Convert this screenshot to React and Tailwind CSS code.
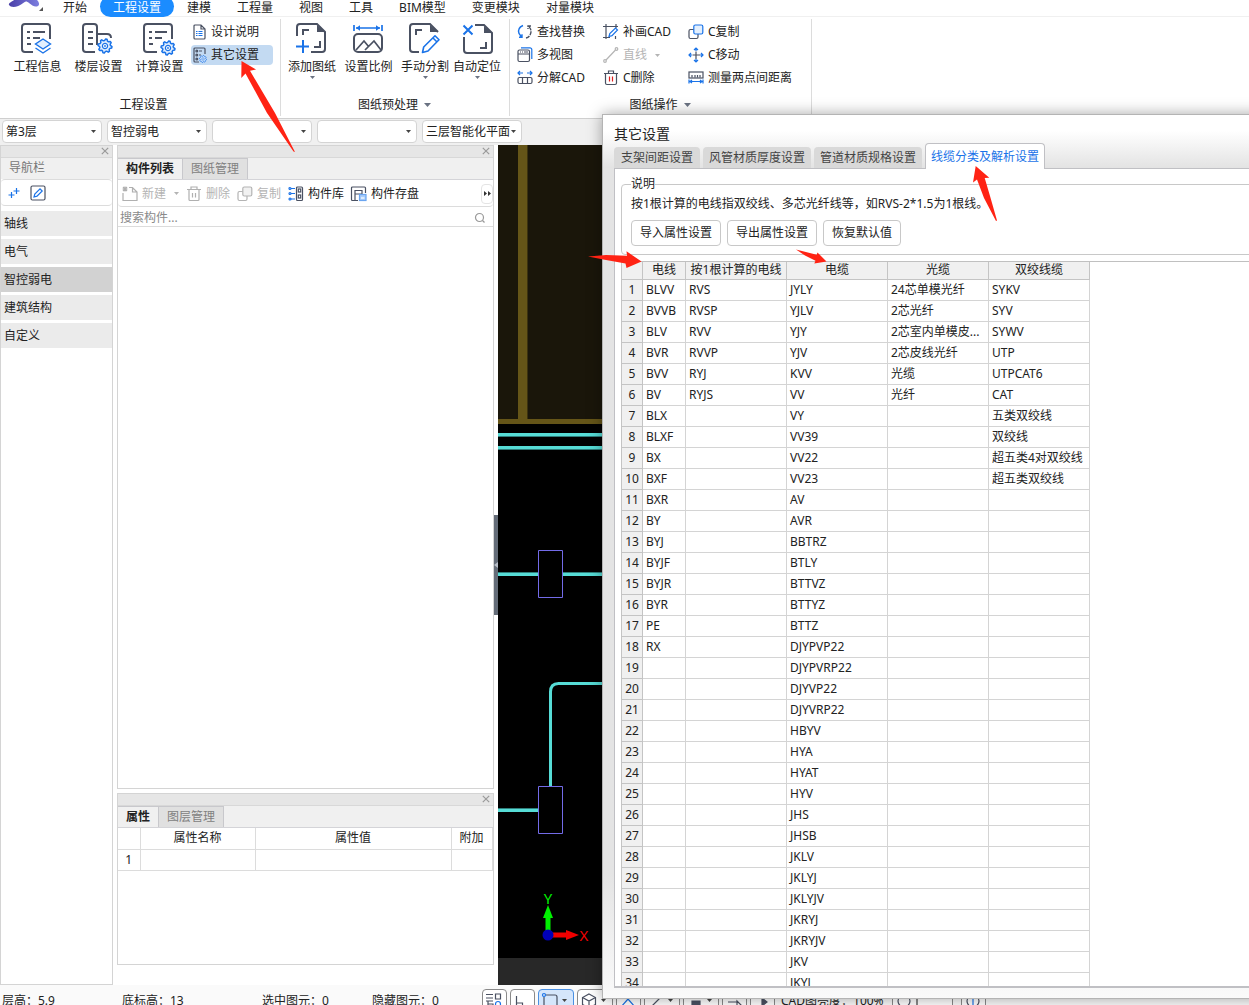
import React from 'react';
import clsx from 'clsx';

const DARK = '#4a5162';
const BLUE = '#1a73e8';

const MENU = ['开始', '工程设置', '建模', '工程量', '视图', '工具', 'BIM模型', '变更模块', '对量模块'];
const NAV = ['轴线', '电气', '智控弱电', '建筑结构', '自定义'];
const COMBOS = [
  { label: '楼层', value: '第3层' },
  { label: '专业', value: '智控弱电' },
  { label: '构件类型', value: '' },
  { label: '构件', value: '' },
  { label: '图纸', value: '三层智能化平面' },
];
const DIALOG_TABS = ['支架间距设置', '风管材质厚度设置', '管道材质规格设置', '线缆分类及解析设置'];

const COLUMNS = [
  {
    title: '电线',
    items: ['BLVV', 'BVVB', 'BLV', 'BVR', 'BVV', 'BV', 'BLX', 'BLXF', 'BX', 'BXF', 'BXR', 'BY', 'BYJ', 'BYJF', 'BYJR', 'BYR', 'PE', 'RX'],
  },
  { title: '按1根计算的电线', items: ['RVS', 'RVSP', 'RVV', 'RVVP', 'RYJ', 'RYJS'] },
  {
    title: '电缆',
    items: [
      'JYLY', 'YJLV', 'YJY', 'YJV', 'KVV', 'VV', 'VY', 'VV39', 'VV22', 'VV23', 'AV', 'AVR', 'BBTRZ', 'BTLY', 'BTTVZ', 'BTTYZ', 'BTTZ',
      'DJYPVP22', 'DJYPVRP22', 'DJYVP22', 'DJYVRP22', 'HBYV', 'HYA', 'HYAT', 'HYV', 'JHS', 'JHSB', 'JKLV', 'JKLYJ', 'JKLYJV', 'JKRYJ',
      'JKRYJV', 'JKV', 'JKYJ',
    ],
  },
  { title: '光缆', items: ['24芯单模光纤', '2芯光纤', '2芯室内单模皮...', '2芯皮线光纤', '光缆', '光纤'] },
  {
    title: '双绞线缆',
    items: ['SYKV', 'SYV', 'SYWV', 'UTP', 'UTPCAT6', 'CAT', '五类双绞线', '双绞线', '超五类4对双绞线', '超五类双绞线'],
  },
];
const ROWS = Array.from({ length: 34 }, (_, i) => i);

// outline of a cog with eight flat teeth
const GEAR_POINTS = Array.from({ length: 32 }, (_, i) => {
  const r = i % 4 < 2 ? 7 : 5.4;
  const a = ((i + 0.5) * Math.PI) / 16;
  return `${(r * Math.cos(a)).toFixed(2)},${(r * Math.sin(a)).toFixed(2)}`;
}).join(' ');

function Svg({ size = 16, className, children }) {
  return (
    <svg
      width={size}
      height={size}
      viewBox={`0 0 ${size} ${size}`}
      fill="none"
      stroke={DARK}
      strokeWidth={size > 20 ? 2 : 1.2}
      className={clsx('shrink-0 overflow-visible', className)}
      aria-hidden="true"
    >
      {children}
    </svg>
  );
}

function Gear({ x, y, s = 1 }) {
  return (
    <g transform={`translate(${x} ${y}) scale(${s})`} stroke={BLUE}>
      <polygon points={GEAR_POINTS} strokeWidth="1.5" strokeLinejoin="round" fill="#e3effd" />
      <circle r="2.6" strokeWidth="1.2" fill="#fff" />
      <circle r="0.9" fill={BLUE} stroke="none" />
    </g>
  );
}

function Caret({ className }) {
  return (
    <svg width="7" height="4" viewBox="0 0 7 4" className={clsx('shrink-0', className)} aria-hidden="true">
      <path d="M0 0h7L3.5 4z" fill="currentColor" />
    </svg>
  );
}

function SmallCaret({ className }) {
  return (
    <svg width="5" height="3" viewBox="0 0 5 3" className={clsx('shrink-0', className)} aria-hidden="true">
      <path d="M0 0h5L2.5 3z" fill="currentColor" />
    </svg>
  );
}

/* ---- large ribbon icons ---- */

const ProjectInfoIcon = () => (
  <Svg size={32}>
    <path d="M11 29H3a3 3 0 0 1-3-3V4a3 3 0 0 1 3-3h22a3 3 0 0 1 3 3v12M5 9h3M11 9h12M5 15h3M11 15h7M5 21h4" />
    <path d="M21 16l7.5 5-7.5 5-7.5-5z" stroke={BLUE} strokeWidth="1.4" fill="#e3effd" />
    <path d="M13.5 25l7.5 5 7.5-5" stroke={BLUE} strokeWidth="1.4" />
  </Svg>
);

const FloorIcon = () => (
  <Svg size={32}>
    <path d="M12 29H3a3 3 0 0 1-3-3V4a3 3 0 0 1 3-3h8a3 3 0 0 1 3 3v18M14 11h10c3 0 4 2 4 4M5 9h5M5 15h5M5 21h5" />
    <Gear x={22} y={23} />
  </Svg>
);

const CalcIcon = () => (
  <Svg size={32}>
    <path d="M13 29H3a3 3 0 0 1-3-3V4a3 3 0 0 1 3-3h22a3 3 0 0 1 3 3v12M5 9h3M11 9h12M5 15h3M11 15h7M5 21h4" />
    <Gear x={24} y={25} />
  </Svg>
);

const AddDrawingIcon = () => (
  <Svg size={32}>
    <path d="M1 13V4a3 3 0 0 1 3-3h17l8 8v17a3 3 0 0 1-3 3H15M7 12V7h6M24 18v6h-6" />
    <path d="M21 2v7h8z" fill={DARK} stroke="none" />
    <path d="M7 17v13M0 23.5h13" stroke={BLUE} />
  </Svg>
);

const ScaleIcon = () => (
  <Svg size={32}>
    <rect x="1" y="11" width="28" height="18" rx="4" />
    <path d="M3 27l8-9 5 6M12 27l9-9 7 9" strokeWidth="1.7" />
    <path d="M1 2v6M29 2v6M3 5h24" stroke={BLUE} strokeWidth="1.7" />
    <path d="M3 5l4-2.8v5.6zM27 5l-4-2.8v5.6z" fill={BLUE} stroke="none" />
  </Svg>
);

const SplitIcon = () => (
  <Svg size={32}>
    <path d="M10 29H4a3 3 0 0 1-3-3V4a3 3 0 0 1 3-3h17l8 8M7 12V7h6" />
    <path d="M21 2v7h8z" fill={DARK} stroke="none" />
    <path d="M13.5 29.5l1.2-5.5L26 12.8l4 4L19 28z M24 15l4 4" stroke={BLUE} strokeWidth="1.6" strokeLinejoin="round" />
  </Svg>
);

const LocateIcon = () => (
  <Svg size={32}>
    <path d="M3 14v13a3 3 0 0 0 3 3h22a3 3 0 0 0 3-3V10l-8-8h-9M25 19v6h-6" />
    <path d="M23 3v7h8z" fill={DARK} stroke="none" />
    <path d="M2.5 2.5l9 9M11.5 2.5l-9 9" stroke={BLUE} />
  </Svg>
);

/* ---- small ribbon icons ---- */

const DesignNoteIcon = () => (
  <Svg>
    <path d="M4 1h6l4 4v9a1 1 0 0 1-1 1H4a1 1 0 0 1-1-1V2a1 1 0 0 1 1-1zM10 1v4h4" />
    <path d="M5 7.5h1.500M7.500 7.500h4M5 9.500h1.500M7.500 9.500h4M5 11.500h1.500M7.500 11.500h4" stroke={BLUE} strokeWidth="1" />
  </Svg>
);

const OtherSettingIcon = () => (
  <Svg>
    <path d="M8 15H4a1 1 0 0 1-1-1V2a1 1 0 0 1 1-1h9a1 1 0 0 1 1 1v5M8 4h3M8 8h2" />
    <circle cx="5.800" cy="4" r="0.900" />
    <circle cx="5.800" cy="8" r="0.900" />
    <circle cx="5.800" cy="12" r="0.900" />
    <Gear x={12} y={12} s={0.5} />
  </Svg>
);

const ReplaceIcon = () => (
  <Svg>
    <path d="M6 1.500C2.500 3 .8 6 2 9.500L4.500 13M2 13.300h3v-3" stroke={BLUE} strokeWidth="1.400" />
    <path d="M9 14c4-1 6-5 4.500-9L12 2.500M14 2h-3v3" strokeDasharray="4 1" strokeWidth="1.400" />
  </Svg>
);

const MultiViewIcon = () => (
  <Svg>
    <rect x="1" y="3" width="11.500" height="11.500" rx="1.500" />
    <path d="M1 7h11.500M3 5h1M5 5h1M7 5h4" />
    <path d="M4 .8h9a1.800 1.800 0 0 1 1.800 1.800V12" stroke={BLUE} />
  </Svg>
);

const ExplodeIcon = () => (
  <Svg>
    <rect x="1" y="7.500" width="14" height="6" rx="1.500" />
    <path d="M5.500 7.500v6M10.500 7.500v6" />
    <path d="M1 3h5M10 3h5M3 1L1 3l2 2M13 1l2 2-2 2" stroke={BLUE} />
  </Svg>
);

const PatchIcon = () => (
  <Svg>
    <path d="M3 0v15M0 2.500h15M12.500 12v3M0 13.500h7M13 0v4" />
    <path d="M6 12.500l.8-3L12.500 4l2 2-5.500 5.700z" stroke={BLUE} />
  </Svg>
);

const LineIcon = () => (
  <Svg>
    <g stroke="#b4b4b4">
      <circle cx="2" cy="14" r="1.300" />
      <circle cx="13.500" cy="2" r="1.300" />
      <path d="M3 13L12.500 3" />
    </g>
  </Svg>
);

const DeleteIcon = () => (
  <Svg>
    <path d="M1 3.500h14M5.500 3V1h5v2M2.500 3.500v9.500a1.500 1.500 0 0 0 1.500 1.500h8a1.500 1.500 0 0 0 1.500-1.500V3.500" />
    <path d="M6.500 6.500v5M9.500 6.500v5" stroke="#e02020" />
  </Svg>
);

const CopyIcon = ({ muted }) => (
  <Svg>
    <rect x="1" y="5.500" width="9" height="9" rx="1.500" stroke={muted ? '#b4b4b4' : DARK} />
    <rect x="5.800" y="1" width="9" height="9" rx="1.500" stroke={muted ? '#b4b4b4' : BLUE} fill={muted ? '#f1f1f1' : '#e3effd'} />
  </Svg>
);

const MoveIcon = () => (
  <Svg>
    <path d="M8 4.500V12M4.500 8H12" />
    <path d="M8 4V1M8 12v3M4 8H1M12 8h3M6 3l2-2 2 2M6 13l2 2 2-2M3 6L1 8l2 2M13 6l2 2-2 2" stroke={BLUE} />
  </Svg>
);

const MeasureIcon = () => (
  <Svg>
    <rect x="1" y="2" width="14" height="6" />
    <path d="M4 5v2.500M7 5v2.500M9.500 5v2.500M12 5v2.500" />
    <path d="M1 9.500v4M15 9.500v4M2 11.500h12M4 10l-2 1.500L4 13M12 10l2 1.500-2 1.500" stroke={BLUE} />
  </Svg>
);

/* ---- panel icons ---- */

const NewIcon = () => (
  <Svg>
    <path d="M1 7v7.500h14V6l-4.500-4.500H7M10.500 1.500V6H15M1 1l4 4M5 1L1 5M3 .5v5M.5 3h5" stroke="#b0b0b0" />
  </Svg>
);

const TrashIcon = () => (
  <Svg>
    <path d="M1 3.500h14M5 3V1h6v2M3 3.500v10a1 1 0 0 0 1 1h8a1 1 0 0 0 1-1v-10M6.500 7v4.500M9.500 7v4.500" stroke="#b0b0b0" />
  </Svg>
);

const LibraryIcon = () => (
  <Svg>
    <rect x="8.500" y="1" width="6" height="13.500" rx="1" />
    <rect x="10.300" y="3" width="2.400" height="3" />
    <rect x="10.300" y="9" width="2.400" height="3" />
    <g stroke={BLUE}>
      <circle cx="2" cy="2.500" r="1" />
      <circle cx="2" cy="7.500" r="1" />
      <circle cx="2" cy="13" r="1" />
      <path d="M3 2.500h4M3 7.500h4M3 13h4" />
    </g>
  </Svg>
);

const SaveIcon = () => (
  <Svg>
    <path d="M7 14.500H1.500a1 1 0 0 1-1-1V2a1 1 0 0 1 1-1h12a1 1 0 0 1 1 1v5M4 14V4M4 4.500h7V8H4" />
    <rect x="8.500" y="8.500" width="6.500" height="6" fill="#a9cdfa" stroke="#6aa5f0" />
    <path d="M10 12h3.500" stroke="#fff" />
  </Svg>
);

const CloseIcon = () => (
  <svg width="8" height="8" viewBox="0 0 8 8" aria-hidden="true">
    <path d="M.8 .8l6.400 6.400M7.200 .8L.8 7.200" stroke="#9a9a9a" strokeWidth="1.200" />
  </svg>
);

function BigButton({ icon, label, className, menu }) {
  return (
    <button type="button" className={clsx('flex flex-col items-center whitespace-nowrap', className)}>
      {icon}
      <span className="mt-[3px] h-[18px] leading-[18px]">{label}</span>
      {menu && <SmallCaret className="text-gray-500" />}
    </button>
  );
}

function SmallButton({ icon, label, muted, menu, active }) {
  return (
    <button
      type="button"
      disabled={muted}
      className={clsx(
        'flex h-5 items-center gap-1 whitespace-nowrap rounded-sm',
        muted && 'text-[#b4b4b4]',
        active && 'bg-[#c3daf2]'
      )}
    >
      {icon}
      {label}
      {menu && <SmallCaret className="ml-1" />}
    </button>
  );
}

function RibbonGroup({ title, menu, className, children }) {
  return (
    <section className={clsx('flex shrink-0 flex-col pb-[3px] pt-1.5', className)}>
      <div className="flex flex-1">{children}</div>
      <div className="flex h-5 items-center justify-center gap-1.5">
        {title}
        {menu && <Caret className="text-gray-500" />}
      </div>
    </section>
  );
}

const Divider = () => <div className="my-0.5 w-px shrink-0 bg-[#dcdcdc]" />;

function Ribbon() {
  return (
    <header className="shrink-0 border-b border-[#cfcfcf] bg-white">
      <nav className="flex h-[17px] items-start border-b border-[#f0f0f0]">
        <div className="w-[50px] shrink-0">
          <svg width="50" height="16" viewBox="0 0 50 16" aria-hidden="true">
            <defs>
              <linearGradient id="logo" x1="0" x2="1">
                <stop offset="0" stopColor="#4a3fa8" />
                <stop offset="1" stopColor="#7d7fe0" />
              </linearGradient>
            </defs>
            <path d="M9 5c2 3 8 3 15-2.500 2-1.500 3-1 5 .5 3 2.500 6 4.500 9 3 2-1.500 1-4-1-6H14c-1 1-6 3-5 5z" fill="url(#logo)" />
            <path d="M43 7v4h-4z" fill="#555" />
          </svg>
        </div>
        {MENU.map((item) => (
          <button
            key={item}
            type="button"
            className={clsx(
              '-mt-1 h-[21px] shrink-0 whitespace-nowrap px-[13px] pt-0.5',
              item === '工程设置' && 'relative rounded-full bg-[#1b8cff] text-white'
            )}
          >
            {item}
          </button>
        ))}
      </nav>
      <div className="flex h-[101px]">
        <RibbonGroup title="工程设置" className="w-[280px] pl-[7px]">
          <BigButton icon={<ProjectInfoIcon />} label="工程信息" className="w-[61px]" />
          <BigButton icon={<FloorIcon />} label="楼层设置" className="w-[61px]" />
          <BigButton icon={<CalcIcon />} label="计算设置" className="w-[61px]" />
          <div className="-mt-1 flex w-[83px] flex-col gap-[3px] pl-px pt-[3px]">
            <SmallButton icon={<DesignNoteIcon />} label="设计说明" />
            <SmallButton icon={<OtherSettingIcon />} label="其它设置" active />
          </div>
        </RibbonGroup>
        <Divider />
        <RibbonGroup title="图纸预处理" menu className="w-[228px] pl-[3px] pr-1">
          <BigButton icon={<AddDrawingIcon />} label="添加图纸" className="w-14" menu />
          <BigButton icon={<ScaleIcon />} label="设置比例" className="w-[57px]" />
          <BigButton icon={<SplitIcon />} label="手动分割" className="w-14" menu />
          <BigButton icon={<LocateIcon />} label="自动定位" className="w-12" menu />
        </RibbonGroup>
        <Divider />
        <RibbonGroup title="图纸操作" menu className="w-[301px] pl-[7px] pr-2">
          <div className="-mt-1 flex w-[86px] flex-col gap-[3px] pt-[3px]">
            <SmallButton icon={<ReplaceIcon />} label="查找替换" />
            <SmallButton icon={<MultiViewIcon />} label="多视图" />
            <SmallButton icon={<ExplodeIcon />} label="分解CAD" />
          </div>
          <div className="-mt-1 flex w-[85px] flex-col gap-[3px] pt-[3px]">
            <SmallButton icon={<PatchIcon />} label="补画CAD" />
            <SmallButton icon={<LineIcon />} label="直线" muted menu />
            <SmallButton icon={<DeleteIcon />} label="C删除" />
          </div>
          <div className="-mt-1 flex flex-col gap-[3px] pt-[3px]">
            <SmallButton icon={<CopyIcon />} label="C复制" />
            <SmallButton icon={<MoveIcon />} label="C移动" />
            <SmallButton icon={<MeasureIcon />} label="测量两点间距离" />
          </div>
        </RibbonGroup>
        <Divider />
      </div>
    </header>
  );
}

function ComboBar() {
  return (
    <div className="flex h-[26px] shrink-0 items-start gap-[5px] bg-[#f0f0f0] pl-0.5 pt-px">
      {COMBOS.map((combo) => (
        <div key={combo.label} className="relative w-[100px] shrink-0">
          <select
            aria-label={combo.label}
            defaultValue={combo.value}
            className="block h-[23px] w-full appearance-none rounded border border-[#d4d4d4] bg-white pl-[3px]"
          >
            <option value={combo.value}>{combo.value}</option>
          </select>
          <SmallCaret className="pointer-events-none absolute right-1.5 top-2.5 text-[#444]" />
        </div>
      ))}
    </div>
  );
}

function PanelHeader() {
  return (
    <div className="flex h-3 shrink-0 items-center justify-end border-b border-[#d8d8d8] bg-[#e6e6e6] pb-px pr-[3px]">
      <button type="button" aria-label="关闭">
        <CloseIcon />
      </button>
    </div>
  );
}

function PanelTabs({ tabs }) {
  return (
    <div className="flex h-[22px] shrink-0 border-b border-[#d4d4d8] bg-[#f0f0f0]">
      {tabs.map((tab, i) => (
        <button
          key={tab}
          type="button"
          className={clsx(
            'whitespace-nowrap border-r border-t border-[#c8c8cc] px-2',
            i === 0 ? 'font-bold' : 'bg-[#e0e0e0] text-[#808080]'
          )}
        >
          {tab}
        </button>
      ))}
    </div>
  );
}

function NavPanel() {
  return (
    <aside className="flex w-[113px] shrink-0 flex-col border border-[#d4d4d4]">
      <PanelHeader />
      <div className="h-[21px] shrink-0 bg-[#f0f0f0] pl-2 leading-5 text-[#777]">导航栏</div>
      <div className="mb-[5px] flex h-[27px] shrink-0 items-center gap-2.5 rounded border-y border-[#dcdcdc] pl-[7px]">
        <button type="button" aria-label="添加">
          <Svg size={12}>
            <path d="M3.500 5v6M.5 8h6M8.500 1v6M5.500 4h6" stroke={BLUE} />
          </Svg>
        </button>
        <button type="button" aria-label="编辑">
          <Svg>
            <rect x="1" y="1" width="14" height="14" rx="1.500" />
            <path d="M4 12l.8-3L10 3.800l2.200 2.200L7 11.200z" stroke={BLUE} />
          </Svg>
        </button>
      </div>
      <ul className="flex flex-col gap-[3px]">
        {NAV.map((item) => (
          <li key={item}>
            <button
              type="button"
              className={clsx('block h-[25px] w-full pl-[3px] text-left', item === '智控弱电' ? 'bg-[#d2d2d2]' : 'bg-[#ebebeb]')}
            >
              {item}
            </button>
          </li>
        ))}
      </ul>
    </aside>
  );
}

function ComponentPanel() {
  return (
    <section className="flex min-h-0 flex-1 flex-col border border-[#d4d4d4]">
      <PanelHeader />
      <PanelTabs tabs={['构件列表', '图纸管理']} />
      <div className="flex h-[27px] shrink-0 items-center gap-[7px] rounded border-b border-[#dcdcdc] pl-1 pt-px">
        <SmallButton icon={<NewIcon />} label="新建" muted menu />
        <SmallButton icon={<TrashIcon />} label="删除" muted />
        <SmallButton icon={<CopyIcon muted />} label="复制" muted />
        <SmallButton icon={<LibraryIcon />} label="构件库" />
        <SmallButton icon={<SaveIcon />} label="构件存盘" />
        <button
          type="button"
          aria-label="更多"
          className="ml-auto flex h-5 w-3 shrink-0 items-center justify-center rounded border border-[#e4e4e4]"
        >
          <svg width="7" height="5" viewBox="0 0 7 5" className="shrink-0" aria-hidden="true">
            <path d="M0 0l3 2.500L0 5zM4 0l3 2.500L4 5z" fill="#333" />
          </svg>
        </button>
      </div>
      <label className="flex h-5 shrink-0 items-center border-b border-[#dcdcdc] pl-0.5 pr-[7px] pt-0.5">
        <input type="search" aria-label="搜索构件" placeholder="搜索构件..." className="min-w-0 flex-1 outline-none placeholder:text-[#8a8a8a]" />
        <Svg size={12}>
          <circle cx="5.500" cy="5.500" r="4" stroke="#999" />
          <path d="M8.500 8.500l2 2" stroke="#999" />
        </Svg>
      </label>
    </section>
  );
}

function PropertyPanel() {
  return (
    <section className="mb-5 mt-1 h-[172px] shrink-0 border border-[#d4d4d4]">
      <PanelHeader />
      <PanelTabs tabs={['属性', '图层管理']} />
      <table className="w-[374px] table-fixed border-collapse text-center">
        <colgroup>
          <col className="w-[22px]" />
          <col className="w-[115px]" />
          <col className="w-[196px]" />
          <col className="w-[41px]" />
        </colgroup>
        <thead>
          <tr className="h-[21px]">
            <th className="border-b border-r border-[#dcdcdc] p-0" />
            {['属性名称', '属性值', '附加'].map((title) => (
              <th key={title} className="border-b border-r border-[#dcdcdc] p-0 font-normal">
                {title}
              </th>
            ))}
          </tr>
        </thead>
        <tbody>
          <tr className="h-[21px]">
            <td className="border-b border-r border-[#dcdcdc] p-0">1</td>
            <td className="border-b border-r border-[#dcdcdc] p-0" />
            <td className="border-b border-r border-[#dcdcdc] p-0" />
            <td className="border-b border-r border-[#dcdcdc] p-0" />
          </tr>
        </tbody>
      </table>
    </section>
  );
}

function Canvas() {
  return (
    <main className="flex min-w-0 flex-1 flex-col bg-black">
      <svg width="100%" height="100%" className="block min-h-0 flex-1" role="img" aria-label="三层智能化平面">
        <rect width="100%" height="275" fill="#1a160a" />
        <rect x="20" width="9" height="275" fill="#655518" />
        <rect x="29" width="1" height="275" fill="#3c320f" />
        <rect y="274" width="100%" height="5" fill="#655518" />
        <rect y="288" width="100%" height="3" fill="#56dcd6" />
        <rect y="291" width="100%" height="1" fill="#2f7f7c" />
        <rect y="301" width="100%" height="3" fill="#56dcd6" />
        <rect y="304" width="100%" height="1" fill="#2f7f7c" />
        <rect y="427" width="41" height="1" fill="#2f7f7c" />
        <rect y="428" width="41" height="3" fill="#56dcd6" />
        <rect x="64" y="427" width="100%" height="1" fill="#2f7f7c" />
        <rect x="64" y="428" width="100%" height="3" fill="#56dcd6" />
        <rect y="663" width="41" height="1" fill="#2f7f7c" />
        <rect y="664" width="41" height="3" fill="#56dcd6" />
        <path d="M52.500 642V547q0-8.500 8-8.500H1200" fill="none" stroke="#56dcd6" strokeWidth="3" />
        <path d="M40.500 405.500h24v47h-24zM40.500 641.500h24v47h-24z" fill="none" stroke="#736be8" />
        <path d="M50 790v-22" stroke="#00f000" strokeWidth="5" />
        <path d="M50 760l5 13H45z" fill="#00f000" />
        <path d="M54 790h14" stroke="#f00000" strokeWidth="5" />
        <path d="M81 790l-13-5v10z" fill="#f00000" />
        <circle cx="50" cy="790" r="5.500" fill="#0000b8" />
        <text x="50" y="759" fill="#00f000" fontSize="15" textAnchor="middle">
          Y
        </text>
        <text x="86" y="796" fill="#f00000" fontSize="15" textAnchor="middle">
          X
        </text>
      </svg>
      <div className="h-[27px] shrink-0 bg-[#282828]" />
    </main>
  );
}

function StatusButton({ label, active, className, children }) {
  return (
    <button
      type="button"
      aria-label={label}
      className={clsx(
        'flex h-6 shrink-0 items-center gap-1 rounded-sm border px-[3px]',
        active ? 'border-[#4a90e2] bg-[#d5e6fb]' : 'border-[#8a8a8a] bg-white',
        className
      )}
    >
      {children}
    </button>
  );
}

function StatusBar() {
  return (
    <footer className="h-5 shrink-0 overflow-hidden bg-[#fafafa]">
      <div className="flex h-[31px] items-center whitespace-nowrap pl-0.5">
        <span className="w-[120px] shrink-0">层高：5.9</span>
        <span className="w-[140px] shrink-0">底标高：13</span>
        <span className="w-[110px] shrink-0">选中图元：0</span>
        <span className="w-[110px] shrink-0">隐藏图元：0</span>
        <div className="flex gap-[3px]">
          <StatusButton label="显示设置" className="w-[25px]">
            <Svg>
              <path d="M0 1.500h7M0 5h7M9.500 1h5v5h-5zM2 8v8M2 11h5v5M0 8h7" />
              <circle cx="12" cy="11" r="2.500" stroke={BLUE} />
            </Svg>
          </StatusButton>
          <StatusButton label="正交" className="w-[25px]">
            <Svg>
              <path d="M2.500 3v12M2.500 10h6v5" />
            </Svg>
          </StatusButton>
          <StatusButton label="框选" active className="w-9">
            <Svg>
              <path d="M4 2h9a2 2 0 0 1 2 2v12M2 4v12" />
              <circle cx="2" cy="2" r="1.500" stroke={BLUE} />
            </Svg>
            <SmallCaret className="text-[#444]" />
          </StatusButton>
          <StatusButton label="三维" className="w-9">
            <Svg>
              <path d="M8 1l6.500 3.500v7L8 15l-6.500-3.500v-7zM1.500 4.500L8 8l6.500-3.500M8 8v7" />
            </Svg>
            <SmallCaret className="text-[#444]" />
          </StatusButton>
          <StatusButton label="顶点" className="w-[25px]">
            <Svg>
              <path d="M1 14l7-8 7 8" stroke={BLUE} />
            </Svg>
          </StatusButton>
          <StatusButton label="延伸" className="w-9">
            <Svg>
              <path d="M3 14L14 3" />
            </Svg>
            <SmallCaret className="text-[#444]" />
          </StatusButton>
          <StatusButton label="图块" className="w-9">
            <Svg>
              <path d="M5 8h8v6H5z" fill={DARK} />
            </Svg>
            <SmallCaret className="text-[#444]" />
          </StatusButton>
          <StatusButton label="列表" className="w-[25px]">
            <Svg>
              <path d="M2 5h9M2 9h9M11 8v7l4-3z" />
            </Svg>
          </StatusButton>
          <StatusButton label="播放" className="w-[25px]">
            <Svg>
              <path d="M8 5v8l5-4z" fill={DARK} />
            </Svg>
          </StatusButton>
        </div>
        <span className="ml-1.5">CAD图亮度：100%</span>
        <StatusButton label="亮度" className="ml-2 w-[25px]">
          <Svg>
            <circle cx="8" cy="8" r="6" />
          </Svg>
        </StatusButton>
        <input aria-label="亮度值" className="h-6 w-9 border border-[#8a8a8a] bg-white" />
        <StatusButton label="亮度复位" className="ml-2 w-[25px]">
          <Svg>
            <circle cx="8" cy="8" r="6" />
            <path d="M8 4v8" stroke={BLUE} />
          </Svg>
        </StatusButton>
      </div>
    </footer>
  );
}

function CableTable() {
  return (
    <table className="w-[469px] table-fixed border-collapse">
      <colgroup>
        <col className="w-[21px]" />
        <col className="w-[43px]" />
        <col className="w-[101px]" />
        <col className="w-[101px]" />
        <col className="w-[101px]" />
        <col className="w-[101px]" />
      </colgroup>
      <thead>
        <tr className="h-[17px] bg-[#f0f0f0]">
          <th className="border border-t-0 border-[#c4c4c4]" />
          {COLUMNS.map((col) => (
            <th key={col.title} className="whitespace-nowrap border border-t-0 border-[#c4c4c4] p-0 font-normal leading-4">
              {col.title}
            </th>
          ))}
        </tr>
      </thead>
      <tbody>
        {ROWS.map((row) => (
          <tr key={row} className="h-[21px]">
            <th className="border border-[#c4c4c4] bg-[#f0f0f0] p-0 text-center font-normal leading-4">{row + 1}</th>
            {COLUMNS.map((col) => (
              <td key={col.title} className="truncate border border-[#d4d4d4] py-0 pl-[3px] pr-1 leading-4">
                {col.items[row]}
              </td>
            ))}
          </tr>
        ))}
      </tbody>
    </table>
  );
}

function SettingsDialog() {
  return (
    <div
      role="dialog"
      aria-labelledby="dialog-title"
      className="absolute -right-5 bottom-1.5 left-[602px] top-[114px] flex flex-col border border-[#b4b4b4] bg-[#e6e6e6] shadow-[0_0_14px_rgba(0,0,0,0.35)]"
    >
      <div className="shrink-0 bg-linear-to-b from-white from-30% to-[#e3e3e3] pl-[11px]">
        <h2 id="dialog-title" className="h-7 pt-2 text-sm leading-[22px]">
          其它设置
        </h2>
        <div role="tablist" className="flex h-[25px] items-end gap-[3px]">
          {DIALOG_TABS.map((tab, i) => (
            <button
              key={tab}
              type="button"
              role="tab"
              aria-selected={i === 3}
              className={clsx(
                'min-w-[86px] whitespace-nowrap',
                i === 3
                  ? 'relative -mb-px h-[26px] rounded-t border border-b-0 border-[#c0c0c4] bg-white px-[5px] text-[#1a73e8]'
                  : 'h-[21px] rounded-t bg-[#d9d9d9] px-1.5 text-[#444]'
              )}
            >
              {tab}
            </button>
          ))}
        </div>
      </div>
      <div className="flex min-h-0 flex-1 flex-col bg-linear-to-t from-[#fafafa] to-[#e4e4e4] to-15% pb-2.5 pl-[11px]">
        <div className="flex min-h-0 flex-1 flex-col border-b-2 border-l border-t border-[#c0c0c4] bg-white pl-1.5 pt-[7px]">
          <fieldset className="mb-1.5 h-[79px] shrink-0 rounded border border-[#c8c8c8] pl-[9px]">
            <legend className="h-4 leading-4">说明</legend>
            <p className="mt-1 leading-4">按1根计算的电线指双绞线、多芯光纤线等，如RVS-2*1.5为1根线。</p>
            <div className="mt-2 flex gap-1.5">
              {['导入属性设置', '导出属性设置', '恢复默认值'].map((label) => (
                <button key={label} type="button" className="h-[26px] rounded border border-[#c8c8c8] bg-white px-2">
                  {label}
                </button>
              ))}
            </div>
          </fieldset>
          <div className="min-h-0 flex-1 overflow-hidden border-t border-[#c0c0c0]">
            <CableTable />
          </div>
        </div>
      </div>
    </div>
  );
}

function Arrows() {
  return (
    <svg className="pointer-events-none absolute inset-0 h-full w-full" fill="#ff2314" aria-hidden="true">
      <path d="M241.500 61L256 69.500L250 70.800L275 113L295 152L293.500 151.500L267 113L245.500 73.500L241.300 78z" />
      <path d="M975.700 166L989.300 177.700L984.700 178L990 196L997 220.500L996 221L984 198L977 179.500L973 182.500z" />
      <path d="M641.500 261.500L626.500 251.300L627 255.800L606 255L588 256.500L606 260L625.500 263.500L626.500 268z" />
      <path d="M826.500 261.500L817.500 252.500L816.700 254.800L796 249.500L805 255.500L815.500 260.800L814.300 263.500z" />
    </svg>
  );
}

export default function App() {
  return (
    <div className="relative flex h-screen flex-col overflow-hidden bg-white font-['Noto_Sans','Noto_Sans_CJK_SC',sans-serif] text-xs text-[#222]">
      <Ribbon />
      <ComboBar />
      <div className="flex min-h-0 flex-1">
        <NavPanel />
        <div className="ml-1 flex w-[377px] shrink-0 flex-col">
          <ComponentPanel />
          <PropertyPanel />
        </div>
        <div className="flex w-1 shrink-0 items-center">
          <button type="button" aria-label="收起" className="flex h-[100px] w-1 items-center bg-[#646c78]">
            <svg width="4" height="6" viewBox="0 0 4 6" aria-hidden="true">
              <path d="M4 0v6L0 3z" fill="#b8bec8" />
            </svg>
          </button>
        </div>
        <Canvas />
      </div>
      <StatusBar />
      <SettingsDialog />
      <Arrows />
    </div>
  );
}
